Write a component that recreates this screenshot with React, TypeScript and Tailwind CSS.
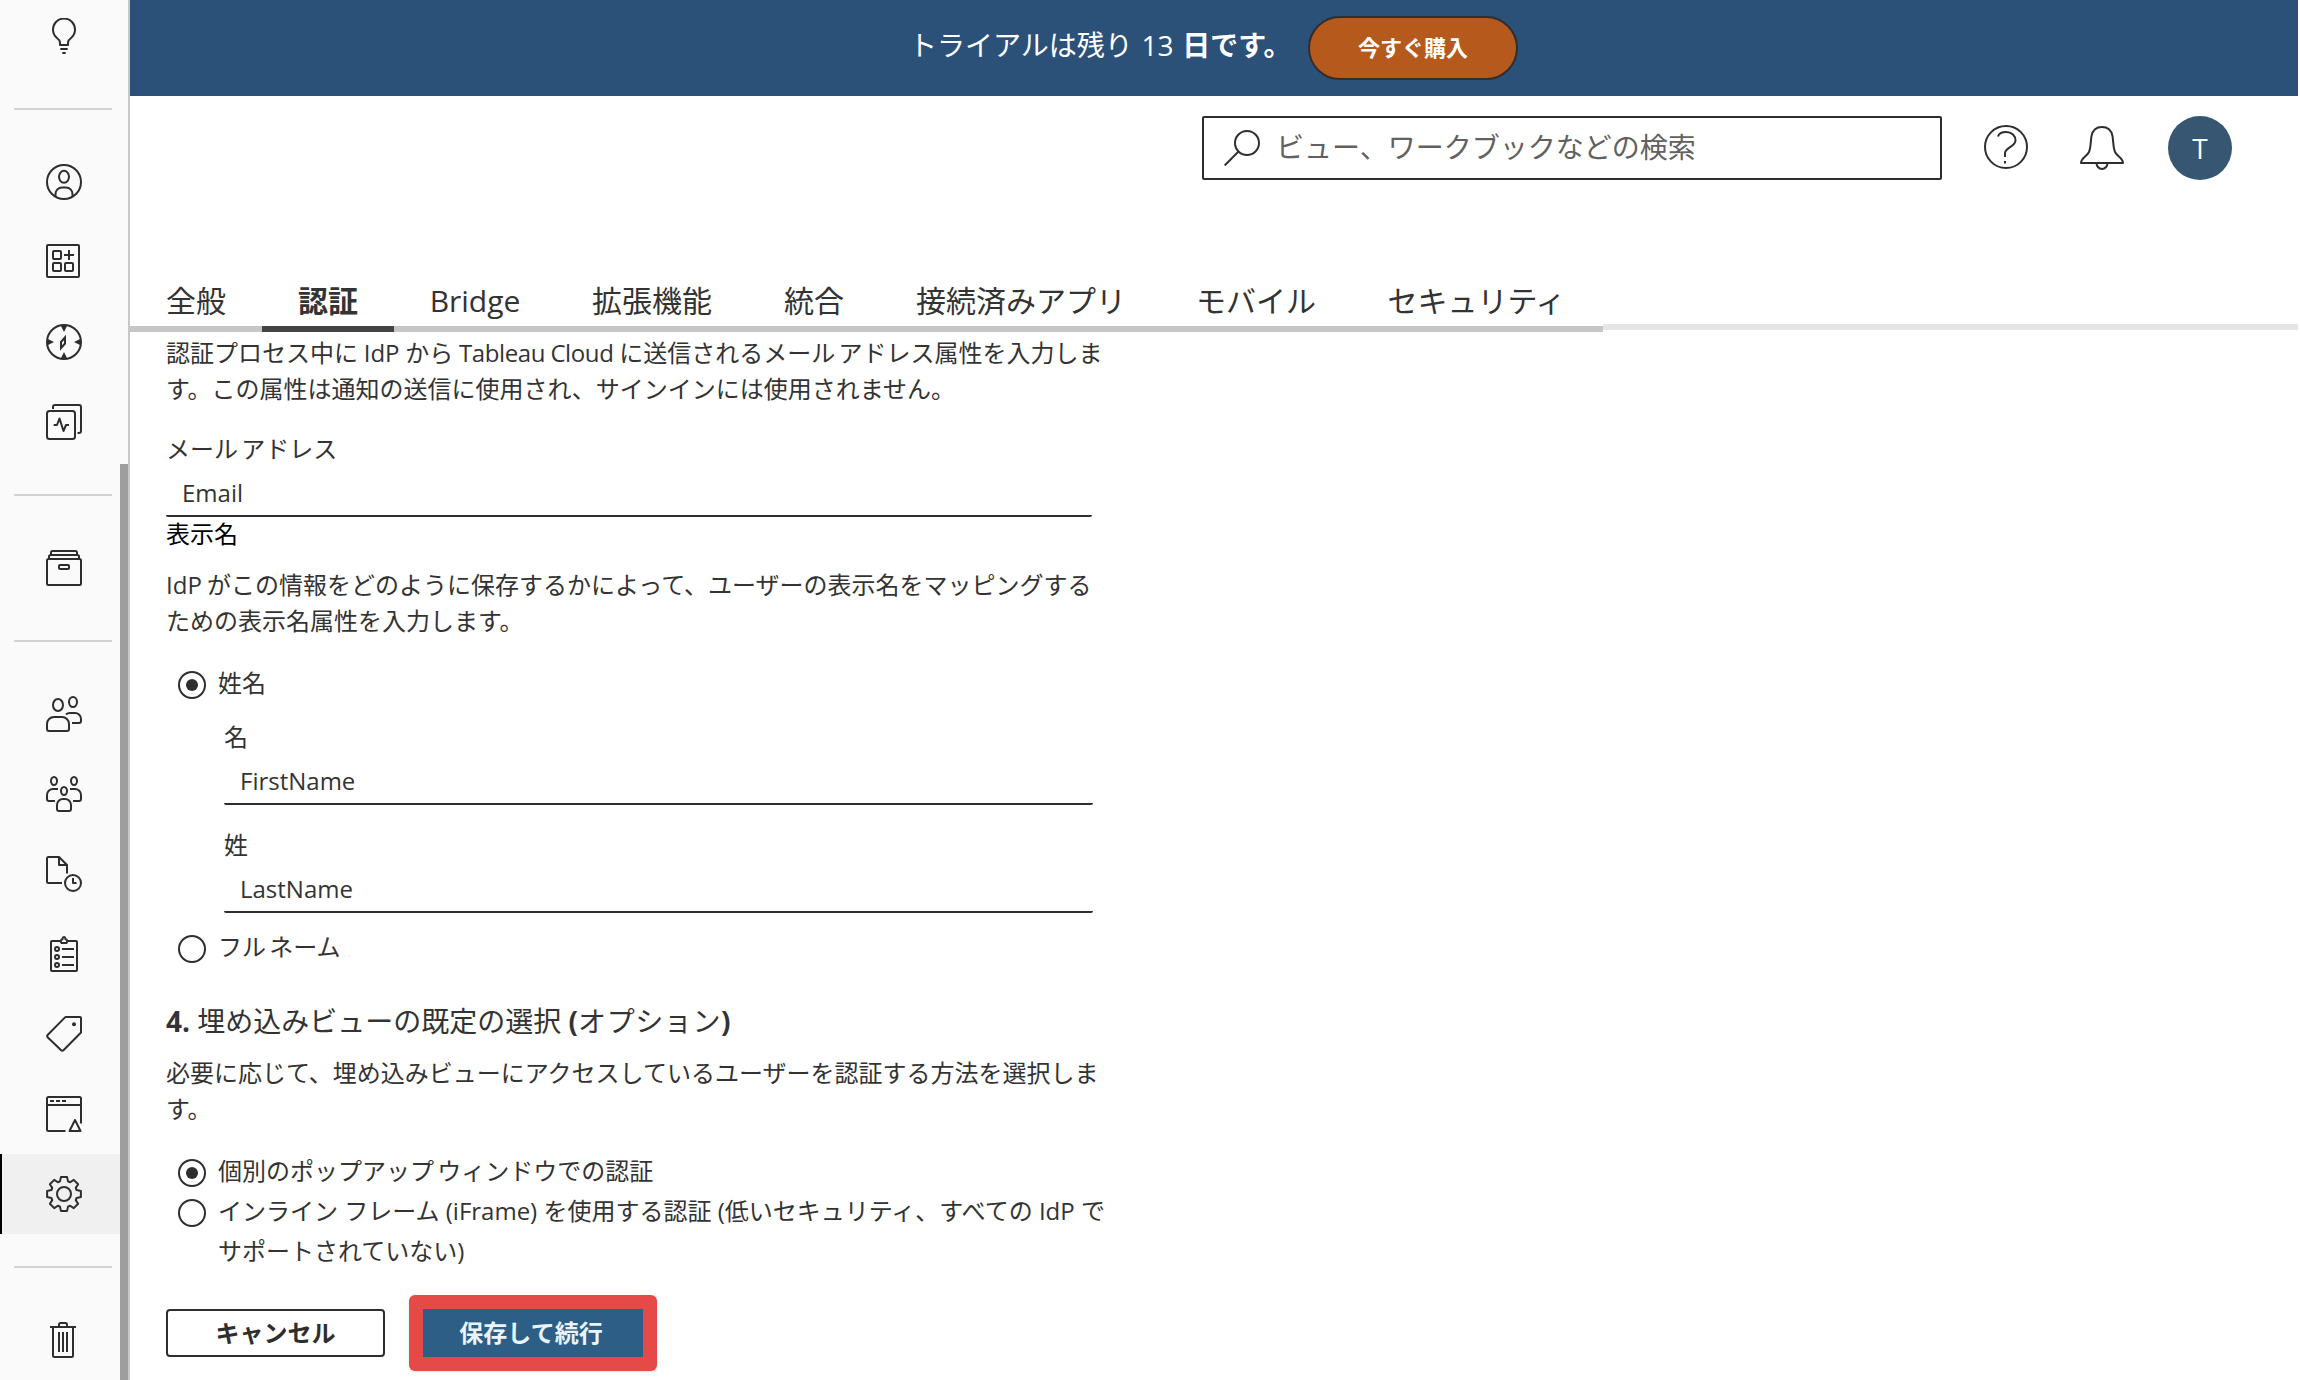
import React, { useState } from 'react';
import clsx from 'clsx';

interface IconProps {
    className?: string;
    children: React.ReactNode;
}

const NavIcon: React.FC<IconProps> = ({ className, children }) => (
    <svg
        width="36"
        height="36"
        viewBox="0 0 36 36"
        fill="none"
        stroke="currentColor"
        strokeWidth="2"
        strokeLinejoin="round"
        className={clsx('shrink-0', className)}
    >
        {children}
    </svg>
);

// One gear tooth per 45 degrees, flat on the outside
const gearPath = () => {
    const points: string[] = [];
    for (let i = 0; i < 8; i++) {
        const a = (i * Math.PI) / 4;
        const corners = [[-4, -12.6], [-3.1, -16.9], [3.1, -16.9], [4, -12.6]];
        corners.forEach(([x, y]) => {
            const px = 18 + x * Math.cos(a) - y * Math.sin(a);
            const py = 18 + x * Math.sin(a) + y * Math.cos(a);
            points.push(`${px.toFixed(2)} ${py.toFixed(2)}`);
        });
    }
    return `M${points.join('L')}Z`;
};

const BulbIcon = () => (
    <NavIcon>
        <path d="M14 27v-2.5c0-2-1-3-3-4.500A11 11 0 1 1 25 20c-2 1.500-3 2.500-3 4.500V27zM14.300 31h7.400M16.300 35h3.400" />
    </NavIcon>
);

const PersonIcon = () => (
    <NavIcon>
        <circle cx="18" cy="18" r="17" />
        <ellipse cx="18" cy="12.800" rx="5" ry="6" />
        <path d="M9.500 32.500V30a6.500 6.500 0 0 1 6.500-6.500h4a6.500 6.500 0 0 1 6.500 6.500v2.500" />
    </NavIcon>
);

const GridPlusIcon = () => (
    <NavIcon>
        <rect x="1" y="1" width="32" height="32" rx="1" />
        <rect x="7" y="7" width="8" height="8" rx="1" />
        <rect x="7" y="19" width="8" height="8" rx="1" />
        <rect x="19" y="19" width="8" height="8" rx="1" />
        <path d="M18 11h10M23 6v10" />
    </NavIcon>
);

const CompassIcon = () => (
    <NavIcon>
        <circle cx="18" cy="18" r="17" />
        <path
            stroke="none"
            fill="currentColor"
            d="M14.500 1h7L18 8zM14.500 35h7L18 28zM1 14.500v7L8 18zM35 14.500v7L28 18z"
        />
        <path strokeLinejoin="miter" d="M19 13.500v6l-4 4.500v-6z" />
    </NavIcon>
);

const PulseIcon = () => (
    <NavIcon>
        <path d="M7 5V3a2 2 0 0 1 2-2h24a2 2 0 0 1 2 2v24a2 2 0 0 1-2 2h-1.500" />
        <rect x="1" y="7" width="28" height="28" rx="2.500" />
        <path d="M7.700 21H11l2.500-6.500 4 12.500 2.500-6h3" />
    </NavIcon>
);

const ArchiveIcon = () => (
    <NavIcon>
        <rect x="1" y="9" width="34" height="26" rx="1.500" />
        <path d="M5 5V2.500A1.500 1.500 0 0 1 6.500 1h23A1.500 1.500 0 0 1 31 2.500V5M3 9V6.500A1.500 1.500 0 0 1 4.500 5h27A1.500 1.500 0 0 1 33 6.500V9" />
        <rect x="13" y="15" width="10" height="4" rx="1" />
    </NavIcon>
);

const UsersIcon = () => (
    <NavIcon>
        <ellipse cx="12" cy="9" rx="5" ry="6" />
        <ellipse cx="27" cy="6" rx="4" ry="5" />
        <path d="M1 33v-5a7 7 0 0 1 7-7h8a7 7 0 0 1 7 7v5a2 2 0 0 1-2 2H3a2 2 0 0 1-2-2zM20 18.500c1-1 2-1.500 4-1.500h5a6 6 0 0 1 6 6v2a2 2 0 0 1-2 2h-7" />
    </NavIcon>
);

const GroupIcon = () => (
    <NavIcon>
        <ellipse cx="8" cy="5" rx="3" ry="4" />
        <ellipse cx="28" cy="5" rx="3" ry="4" />
        <ellipse cx="18" cy="15" rx="3" ry="4" />
        <path d="M12 13H7a6 6 0 0 0-6 6v4a2 2 0 0 0 2 2h6M24 13h5a6 6 0 0 1 6 6v4a2 2 0 0 1-2 2h-6M11 33v-4a6 6 0 0 1 6-6h2a6 6 0 0 1 6 6v4a2 2 0 0 1-2 2H13a2 2 0 0 1-2-2z" />
    </NavIcon>
);

const ScheduleIcon = () => (
    <NavIcon>
        <path d="M16 27H2.500A1.500 1.500 0 0 1 1 25.500v-23A1.500 1.500 0 0 1 2.500 1H13l8 8v8.500M13 1v8h8" />
        <circle cx="27" cy="27" r="8" />
        <path d="M27 22v5h3.500" />
    </NavIcon>
);

const JobsIcon = () => (
    <NavIcon>
        <rect x="5" y="5" width="26" height="30" rx="1" />
        <path className="fill-[#fafafa]" d="M15.500 7c-1.500-1.500-.5-3.500 1-3.700C16.700 2 17 1 18 1s1.300 1 1.500 2.300c1.500.2 2.500 2.200 1 3.700z" />
        <circle cx="11" cy="13" r="2" />
        <circle cx="11" cy="21" r="2" />
        <circle cx="11" cy="29" r="2" />
        <path d="M16 13h12M16 21h12M16 29h12" />
    </NavIcon>
);

const TagIcon = () => (
    <NavIcon>
        <path d="M20 1h14a1 1 0 0 1 1 1v14.500L17.700 34a2 2 0 0 1-2.800 0L1.600 21.200a1.500 1.500 0 0 1 0-2.200L19 1.400z" />
        <circle cx="28" cy="8.300" r="2" fill="currentColor" stroke="none" />
    </NavIcon>
);

const SiteStatusIcon = () => (
    <NavIcon>
        <path d="M19.500 35h-17A1.500 1.500 0 0 1 1 33.500v-31A1.500 1.500 0 0 1 2.500 1h31A1.500 1.500 0 0 1 35 2.500V27.500M1 9h34M4 5h4M10 5h4M16 5h4" />
        <path d="M29 24l-5.500 11h11z" />
    </NavIcon>
);

const GearIcon = () => (
    <NavIcon>
        <path d={gearPath()} />
        <circle cx="18" cy="18" r="7" />
    </NavIcon>
);

const TrashIcon = () => (
    <NavIcon>
        <path d="M4 5h26M13 5V2.500A1.500 1.500 0 0 1 14.500 1h5A1.500 1.500 0 0 1 21 2.500V5M7 5v28.500A1.500 1.500 0 0 0 8.500 35h17a1.500 1.500 0 0 0 1.500-1.500V5M13 10v20M17 10v20M21 10v20" />
    </NavIcon>
);

const navGroups: { id: string; icon: React.FC }[][] = [
    [{ id: 'tips', icon: BulbIcon }],
    [
        { id: 'personal', icon: PersonIcon },
        { id: 'collections', icon: GridPlusIcon },
        { id: 'explore', icon: CompassIcon },
        { id: 'pulse', icon: PulseIcon },
    ],
    [{ id: 'assets', icon: ArchiveIcon }],
    [
        { id: 'users', icon: UsersIcon },
        { id: 'groups', icon: GroupIcon },
        { id: 'schedules', icon: ScheduleIcon },
        { id: 'jobs', icon: JobsIcon },
        { id: 'tags', icon: TagIcon },
        { id: 'status', icon: SiteStatusIcon },
        { id: 'settings', icon: GearIcon },
    ],
    [{ id: 'trash', icon: TrashIcon }],
];

const Sidebar: React.FC = () => (
    <nav className="relative w-[130px] shrink-0 border-r-2 border-[#c8c8c8] bg-[#fafafa] text-[#2e2e2e]">
        <div className="-mt-1">
            {navGroups.map((group, i) => (
                <div key={group[0].id}>
                    {i > 0 && <div className="my-8 ml-3.5 h-0.5 w-[98px] bg-[#d2d2d2]" />}
                    {group.map(({ id, icon: Icon }) => (
                        <button
                            key={id}
                            type="button"
                            className={clsx(
                                'flex h-20 w-full items-center border-l-2 pl-11',
                                id === 'settings' ? 'border-black bg-[#f0f0f0]' : 'border-transparent',
                            )}
                        >
                            <Icon />
                        </button>
                    ))}
                </div>
            ))}
        </div>
        <div className="absolute top-[464px] right-0 bottom-0 w-2 bg-[#9e9e9e]" />
    </nav>
);

const tabs = [
    { label: '全般', width: 'w-[132px]' },
    { label: '認証', width: 'w-[132px]' },
    { label: 'Bridge', width: 'w-[162px]' },
    { label: '拡張機能', width: 'w-[192px]' },
    { label: '統合', width: 'w-[132px]' },
    { label: '接続済みアプリ', width: 'w-[282px]' },
    { label: 'モバイル', width: 'w-[188px]' },
    { label: 'セキュリティ', width: 'w-[253px]' },
];

const Tabs: React.FC = () => (
    <div className="flex h-[62px] items-start">
        {tabs.map(({ label, width }) => {
            const active = label === '認証';
            return (
                <button
                    key={label}
                    type="button"
                    className={clsx(
                        'h-[62px] border-b-6 pt-1 text-center text-[30px] leading-[51px] whitespace-nowrap',
                        width,
                        active ? 'border-[#434343] font-bold' : 'border-[#c6c6c6]',
                    )}
                >
                    {label}
                </button>
            );
        })}
        <div className="mt-[54px] h-1.5 flex-1 bg-[#e5e5e5]" />
    </div>
);

const TextField: React.FC<{ label: string; defaultValue: string; className?: string }> = ({
    label,
    defaultValue,
    className,
}) => (
    <label className={clsx('block', className)}>
        <span className="block h-[37px] [word-spacing:-3px]">{label}</span>
        <input
            type="text"
            defaultValue={defaultValue}
            className="block h-[49px] w-full rounded-xs border-b-2 border-[#2e2e2e] bg-transparent pt-0.5 pl-4 outline-none"
        />
    </label>
);

interface RadioProps {
    checked: boolean;
    onSelect: () => void;
    className?: string;
    children: React.ReactNode;
}

const Radio: React.FC<RadioProps> = ({ checked, onSelect, className, children }) => (
    <label className={clsx('flex gap-3 pl-3', className)}>
        <input type="radio" checked={checked} onChange={onSelect} className="sr-only" />
        <span className="mt-1.5 flex size-7 shrink-0 items-center justify-center rounded-full border-2 border-[#2e2e2e]">
            {checked && <span className="size-3 rounded-full bg-[#2e2e2e]" />}
        </span>
        <span className="whitespace-nowrap">{children}</span>
    </label>
);

const App: React.FC = () => {
    const [nameMode, setNameMode] = useState<'split' | 'full'>('split');
    const [embedMode, setEmbedMode] = useState<'popup' | 'iframe'>('popup');

    return (
        <div
            lang="ja"
            className="flex h-[1380px] w-[2300px] overflow-hidden bg-white font-['Open_Sans','Noto_Sans_CJK_JP',sans-serif] text-[24px] leading-9 text-[#333333]"
        >
            <Sidebar />

            <div className="mr-0.5 flex-1">
                <div className="flex h-24 items-center bg-[#2c5179] pl-[779px] text-[28px] text-white">
                    <span className="w-[399px] pb-1.5 whitespace-nowrap [word-spacing:1.5px]">
                        トライアルは残り 13 <b>日です。</b>
                    </span>
                    <button
                        type="button"
                        className="h-16 w-[210px] rounded-full border-2 border-[#2e2e2e] bg-[#b55a1c] pb-0.5 text-[22px] font-bold"
                    >
                        今すぐ購入
                    </button>
                </div>

                <header className="flex h-[174px] items-start justify-end pt-5 pr-[66px] text-[#2e2e2e]">
                    <div className="flex h-16 w-[740px] items-center rounded-xs border-2 border-[#2e2e2e] pl-5">
                        <svg width="36" height="36" viewBox="0 0 36 36" fill="none" stroke="currentColor" strokeWidth="2">
                            <circle cx="23" cy="13" r="12" />
                            <path d="M14.500 21.500L0.700 35.500" />
                        </svg>
                        <span className="ml-4 pb-0.5 text-[28px] text-[#616161]">ビュー、ワークブックなどの検索</span>
                    </div>
                    <svg width="44" height="44" viewBox="0 0 44 44" fill="none" stroke="currentColor" strokeWidth="2" className="mt-[9px] ml-[42px]">
                        <circle cx="22" cy="22" r="21" />
                        <path d="M14 11.500C15 8 18 7 22 7c6 0 9.500 4 9.500 8.500 0 6-10.500 7-10.500 12.500v4M21 36v2.500" />
                    </svg>
                    <svg width="46" height="46" viewBox="0 0 46 46" fill="none" stroke="currentColor" strokeWidth="2" strokeLinejoin="round" className="mt-[10px] ml-[51px]">
                        <path d="M23 1c-6 0-9.500 4-10.500 9-1 6-.5 11-2.500 16-2 4-8 6-8 11h42c0-5-6-7-8-11-2-5-1.500-10-2.500-16C32.500 5 29 1 23 1z" />
                        <path d="M17.500 37a5.500 6 0 0 0 11 0" />
                    </svg>
                    <div className="ml-[43px] flex size-16 items-center justify-center rounded-full bg-[#375672] text-[28px] text-white">
                        T
                    </div>
                </header>

                <Tabs />

                <main className="pt-[3px] pl-9">
                    <p className="whitespace-nowrap [word-spacing:-0.5px]">
                        認証プロセス中に IdP から <span className="tracking-[-0.4px]">Tableau Cloud</span> に送信される
                        <span className="[word-spacing:-3px]">メール アドレス</span>属性を入力しま
                        <br />
                        す。この属性は通知の送信に使用され、サインインには使用されません。
                    </p>

                    <TextField label="メール アドレス" defaultValue="Email" className="mt-6 w-[926px]" />

                    <h4 className="-mt-px text-black">表示名</h4>
                    <p className="mt-[15px] whitespace-nowrap [word-spacing:-1px]">
                        IdP がこの情報をどのように保存するかによって、ユーザーの表示名をマッピングする
                        <br />
                        ための表示名属性を入力します。
                    </p>

                    <Radio checked={nameMode === 'split'} onSelect={() => setNameMode('split')} className="mt-[26px]">
                        姓名
                    </Radio>
                    <TextField label="名" defaultValue="FirstName" className="mt-[18px] ml-[58px] w-[869px]" />
                    <TextField label="姓" defaultValue="LastName" className="mt-[22px] ml-[58px] w-[869px]" />
                    <Radio
                        checked={nameMode === 'full'}
                        onSelect={() => setNameMode('full')}
                        className="mt-4 [word-spacing:-3px]"
                    >
                        フル ネーム
                    </Radio>

                    <h3 className="mt-[38px] text-[28px] whitespace-nowrap">
                        <b>4.</b> 埋め込みビューの既定の選択 <b>(</b>
                        <span className="tracking-[0.6px]">オプション</span>
                        <b>)</b>
                    </h3>
                    <p className="mt-4 whitespace-nowrap">
                        必要に応じて、埋め込みビューにアクセスしているユーザーを認証する方法を選択しま
                        <br />
                        す。
                    </p>

                    <Radio
                        checked={embedMode === 'popup'}
                        onSelect={() => setEmbedMode('popup')}
                        className="mt-[26px] [word-spacing:-3px]"
                    >
                        個別のポップアップ ウィンドウでの認証
                    </Radio>
                    <Radio checked={embedMode === 'iframe'} onSelect={() => setEmbedMode('iframe')} className="mt-1">
                        <span className="-mt-0.5 block leading-10">
                            インライン フレーム (iFrame) を使用する認証 (低いセキュリティ、すべての IdP で
                            <br />
                            サポートされていない)
                        </span>
                    </Radio>

                    <div className="mt-6 flex items-center gap-6 font-bold">
                        <button type="button" className="h-12 w-[219px] rounded-sm border-2 border-[#2e2e2e] text-[#2e2e2e]">
                            キャンセル
                        </button>
                        <div className="rounded-md bg-[#e54a47] p-3.5 shadow-sm">
                            <button type="button" className="block h-12 w-[220px] bg-[#2d5f86] pr-1 text-[#ebf4fd]">
                                保存して続行
                            </button>
                        </div>
                    </div>
                </main>
            </div>
        </div>
    );
};

export default App;
